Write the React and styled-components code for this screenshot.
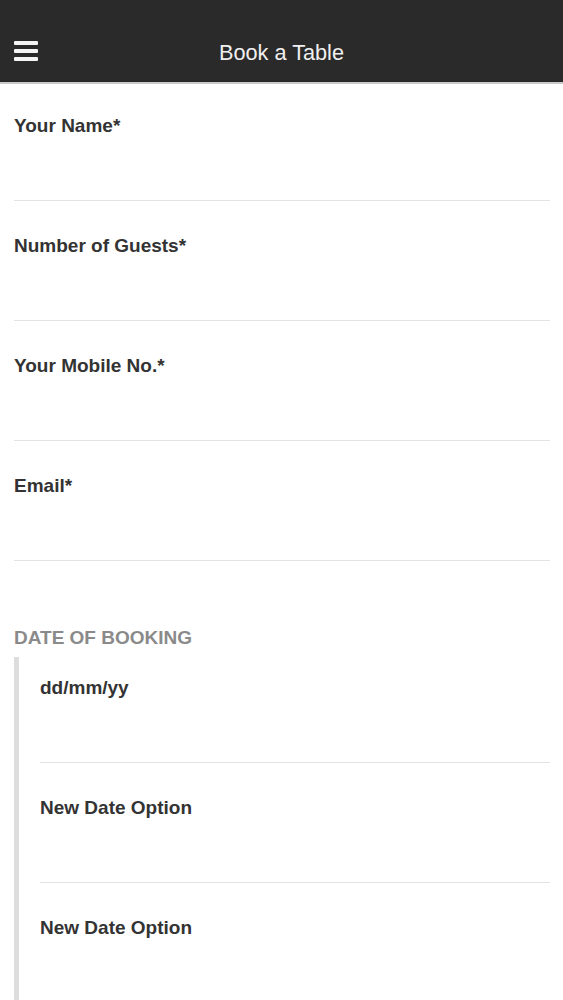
import React from 'react';
import styled, { createGlobalStyle } from 'styled-components';

const GlobalStyle = createGlobalStyle`
    body {
        margin: 0;
        background: #ffffff;
        font-family: "Liberation Sans", Arial, sans-serif;
    }
`;

const Page = styled.div`
    width: 563px;
    min-height: 1000px;
    background: #ffffff;
    overflow: hidden;
`;

const TopBar = styled.header`
    position: relative;
    background: #2a2a2a;
    border-bottom: 2px solid #c9c9c9;
    display: flex;
    align-items: flex-end;
    justify-content: center;
    padding-bottom: 17px;
    box-sizing: content-box;
    height: 65px;
`;

const MenuButton = styled.button`
    position: absolute;
    left: 14px;
    top: 41px;
    width: 24px;
    height: 20px;
    padding: 0;
    border: none;
    background: none;
    display: flex;
    flex-direction: column;
    justify-content: space-between;
    cursor: pointer;
`;

const MenuLine = styled.span`
    display: block;
    height: 4px;
    border-radius: 1px;
    background: #f4f4f4;
`;

const Title = styled.h1`
    margin: 0;
    font-size: 21.7px;
    font-weight: normal;
    color: #f0f0f0;
    line-height: 24px;
`;

const Form = styled.div`
    padding: 0 13px 0 14px;
`;

const Field = styled.div`
    padding-top: ${props => props.first ? '32px' : '35px'};
    border-bottom: 1px solid #e3e3e3;
`;

const Label = styled.div`
    font-size: 19px;
    font-weight: bold;
    color: #333333;
    line-height: 20px;
`;

const InputArea = styled.div`
    height: 64px;
`;

const SectionTitle = styled.div`
    margin-top: 67px;
    font-size: 19px;
    font-weight: bold;
    color: #8a8a8a;
    line-height: 20px;
    text-transform: uppercase;
`;

const Group = styled.div`
    margin-top: 9px;
    border-left: 5px solid #dddddd;
    padding-left: 21px;
    padding-bottom: 40px;
`;

const SubField = styled(Field)`
    padding-top: ${props => props.first ? '21px' : '35px'};
`;

const fields = ['Your Name*', 'Number of Guests*', 'Your Mobile No.*', 'Email*'];
const dates = ['dd/mm/yy', 'New Date Option', 'New Date Option'];

export default function App() {
    return (
        <Page>
            <GlobalStyle />
            <TopBar>
                <MenuButton aria-label="Menu">
                    <MenuLine />
                    <MenuLine />
                    <MenuLine />
                </MenuButton>
                <Title>Book a Table</Title>
            </TopBar>
            <Form>
                {fields.map((f, i) => (
                    <Field key={f} first={i === 0}>
                        <Label>{f}</Label>
                        <InputArea />
                    </Field>
                ))}
                <SectionTitle>Date of Booking</SectionTitle>
                <Group>
                    {dates.map((d, i) => (
                        <SubField key={i} first={i === 0}>
                            <Label>{d}</Label>
                            <InputArea />
                        </SubField>
                    ))}
                </Group>
            </Form>
        </Page>
    );
}
